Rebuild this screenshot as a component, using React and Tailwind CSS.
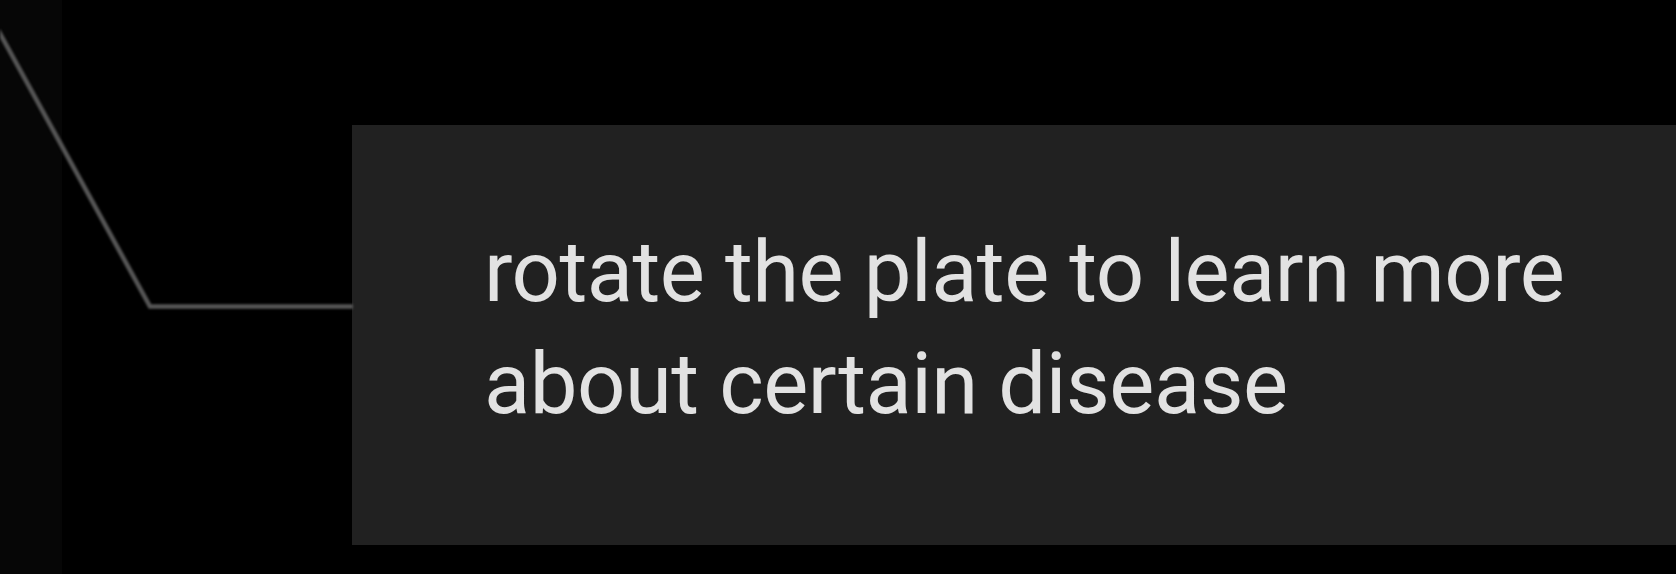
import React from 'react';

const Connector = () => (
  <svg
    className="absolute left-0 top-0 pointer-events-none blur-[0.8px]"
    width="360"
    height="320"
    viewBox="0 0 360 320"
    fill="none"
  >
    <polyline
      points="-3,28 150,306.5 353,306.5"
      stroke="#555555"
      strokeWidth="4.6"
      strokeLinejoin="miter"
    />
  </svg>
);

const App = () => {
  return (
    <div className="relative w-full h-[574px] bg-black flex overflow-hidden">
      {/* Dim strip at the left edge */}
      <div className="w-[62px] h-full bg-[#060606] shrink-0" />

      <div className="flex-1 pt-[125px] pl-[290px]">
        {/* Hint card */}
        <div className="h-[420px] bg-[#212121] flex items-center pl-[132px] pb-[14px]">
          <p
            className="text-[#e2e2e2] text-[85px] leading-[112px] tracking-[-0.5px] whitespace-nowrap"
            style={{ fontFamily: 'Roboto, "Noto Sans", sans-serif' }}
          >
            rotate the plate to learn more
            <br />
            about certain disease
          </p>
        </div>
      </div>

      <Connector />
    </div>
  );
};

export default App;
